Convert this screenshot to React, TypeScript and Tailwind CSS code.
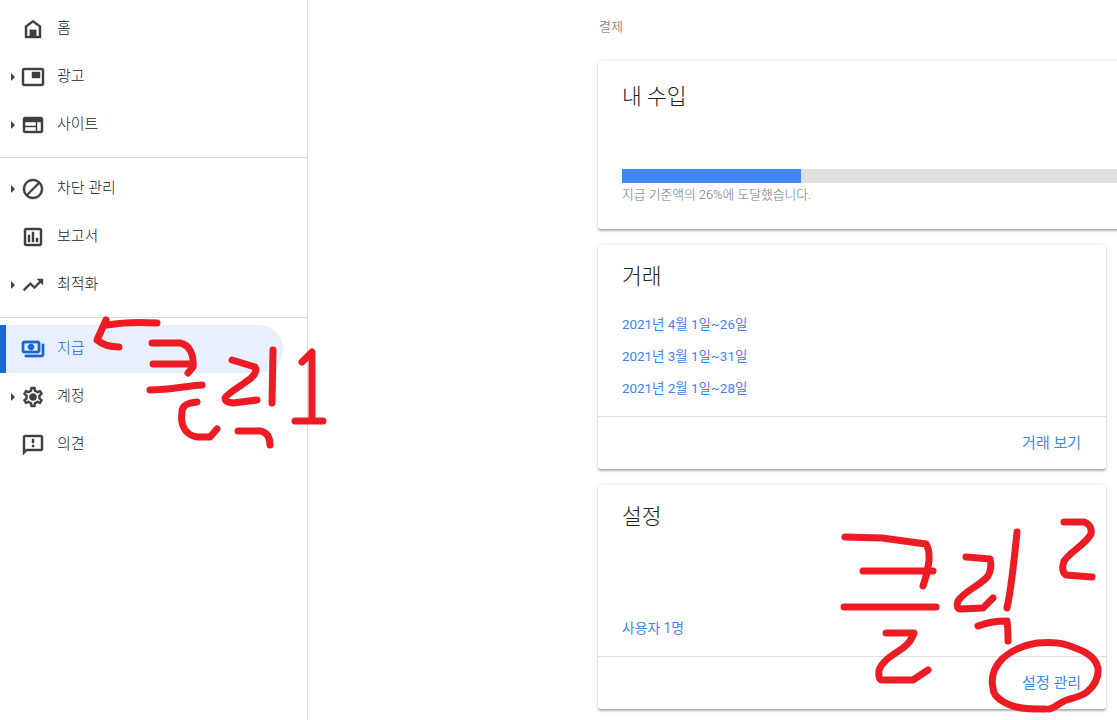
import React from "react";

const ICON = "#3c4043";

function Icon({ d, color = ICON, weight = "0.45", children }: { d?: string; color?: string; weight?: string; children?: React.ReactNode }) {
  return (
    <svg width="24" height="24" viewBox="0 0 24 24" fill={color} stroke={color} strokeWidth={weight} className="shrink-0">
      {d && <path d={d} />}
      {children}
    </svg>
  );
}

const gear =
  "M19.43 12.98c.04-.32.07-.64.07-.98 0-.34-.03-.66-.07-.98l2.11-1.65c.19-.15.24-.42.12-.64l-2-3.46c-.09-.16-.26-.25-.44-.25-.06 0-.12.01-.17.03l-2.49 1c-.52-.4-1.08-.73-1.69-.98l-.38-2.65C14.46 2.18 14.25 2 14 2h-4c-.25 0-.46.18-.49.42l-.38 2.65c-.61.25-1.17.59-1.69.98l-2.49-1c-.06-.02-.12-.03-.18-.03-.17 0-.34.09-.43.25l-2 3.46c-.13.22-.07.49.12.64l2.11 1.65c-.04.32-.07.65-.07.98 0 .33.03.66.07.98l-2.11 1.65c-.19.15-.24.42-.12.64l2 3.46c.09.16.26.25.44.25.06 0 .12-.01.17-.03l2.49-1c.52.4 1.08.73 1.69.98l.38 2.65c.03.24.24.42.49.42h4c.25 0 .46-.18.49-.42l.38-2.65c.61-.25 1.17-.59 1.69-.98l2.49 1c.06.02.12.03.18.03.17 0 .34-.09.43-.25l2-3.46c.12-.22.07-.49-.12-.64l-2.11-1.65zm-1.98-1.71c.04.31.05.52.05.73 0 .21-.02.43-.05.73l-.14 1.13.89.7 1.08.84-.7 1.21-1.27-.51-1.04-.42-.9.68c-.43.32-.84.56-1.25.73l-1.06.43-.16 1.13-.2 1.35h-1.4l-.19-1.35-.16-1.13-1.06-.43c-.43-.18-.83-.41-1.23-.71l-.91-.7-1.06.43-1.27.51-.7-1.21 1.08-.84.89-.7-.14-1.13c-.03-.31-.05-.54-.05-.74s.02-.43.05-.73l.14-1.13-.89-.7-1.08-.84.7-1.21 1.27.51 1.04.42.9-.68c.43-.32.84-.56 1.25-.73l1.06-.43.16-1.13.2-1.35h1.39l.19 1.35.16 1.13 1.06.43c.43.18.83.41 1.23.71l.91.7 1.06-.43 1.27-.51.7 1.21-1.07.85-.89.7.14 1.13z";

type Item = { label: string; caret?: boolean; icon: React.ReactNode; active?: boolean };

const groupA: Item[] = [
  {
    label: "홈",
    icon: (
      <Icon d="M12 3L4 9v12h16V9l-8-6zm6 16h-3v-6H9v6H6v-9l6-4.5 6 4.5v9z">
        <rect x="9" y="13" width="6" height="7" />
      </Icon>
    ),
  },
  {
    label: "광고",
    caret: true,
    icon: <Icon d="M19 7h-8v6h8V7zm2-4H3c-1.1 0-2 .9-2 2v14c0 1.1.9 1.98 2 1.98h18c1.1 0 2-.88 2-1.98V5c0-1.1-.9-2-2-2zm0 16.01H3V4.98h18v14.03z" />,
  },
  {
    label: "사이트",
    caret: true,
    icon: <Icon d="M20 4H4c-1.1 0-1.99.9-1.99 2L2 18c0 1.1.9 2 2 2h16c1.1 0 2-.9 2-2V6c0-1.1-.9-2-2-2zm-5 14H4v-4h11v4zm0-5H4V9h11v4zm5 5h-4V9h4v9z" />,
  },
];

const groupB: Item[] = [
  {
    label: "차단 관리",
    caret: true,
    icon: <Icon d="M12 2C6.48 2 2 6.48 2 12s4.48 10 10 10 10-4.48 10-10S17.52 2 12 2zM4 12c0-4.42 3.58-8 8-8 1.85 0 3.55.63 4.9 1.69L5.69 16.9C4.63 15.55 4 13.85 4 12zm8 8c-1.85 0-3.55-.63-4.9-1.69L18.31 7.1C19.37 8.45 20 10.15 20 12c0 4.42-3.58 8-8 8z" />,
  },
  {
    label: "보고서",
    icon: <Icon d="M19 3H5c-1.1 0-2 .9-2 2v14c0 1.1.9 2 2 2h14c1.1 0 2-.9 2-2V5c0-1.1-.9-2-2-2zm0 16H5V5h14v14zM7 10h2v7H7zm4-3h2v10h-2zm4 6h2v4h-2z" />,
  },
  {
    label: "최적화",
    caret: true,
    icon: <Icon d="M16 6l2.29 2.29-4.88 4.88-4-4L2 16.59 3.41 18l6-6 4 4 6.3-6.29L22 12V6z" />,
  },
];

const groupC: Item[] = [
  {
    label: "지급",
    active: true,
    icon: (
      <Icon color="#1967d2" weight="0.8" d="M19 14V6c0-1.1-.9-2-2-2H3c-1.1 0-2 .9-2 2v8c0 1.1.9 2 2 2h14c1.1 0 2-.9 2-2zm-2 0H3V6h14v8zm-7-7c-1.66 0-3 1.34-3 3s1.34 3 3 3 3-1.34 3-3-1.34-3-3-3zm13 0v11c0 1.1-.9 2-2 2H4v-2h17V7h2z" />
    ),
  },
  {
    label: "계정",
    caret: true,
    icon: (
      <Icon d={gear}>
        <circle cx="12" cy="12" r="3.6" />
      </Icon>
    ),
  },
  {
    label: "의견",
    icon: <Icon d="M20 2H4c-1.1 0-1.99.9-1.99 2L2 22l4-4h14c1.1 0 2-.9 2-2V4c0-1.1-.9-2-2-2zm0 14H5.17L4 17.17V4h16v12zm-9-4h2v2h-2zm0-6h2v4h-2z" />,
  },
];

function NavRow({ item }: { item: Item }) {
  return (
    <div
      className={
        "flex h-12 items-center rounded-r-3xl " +
        (item.active ? "w-[283px] border-l-[6px] border-[#1967d2] bg-[#e8f0fe] pl-[15px] text-[#1967d2]" : "w-full pl-[21px] text-[#202124]")
      }
    >
      <div className="relative">
        {item.caret && (
          <span className="absolute left-[-10px] top-[8px] h-0 w-0 border-y-[4px] border-l-[4px] border-y-transparent border-l-[#3c4043]" />
        )}
        {item.icon}
      </div>
      <span className="ml-3 -mt-0.5 text-[15px] font-light">{item.label}</span>
    </div>
  );
}

function Card({ children, wide }: { children: React.ReactNode; wide?: boolean }) {
  return (
    <section
      className={
        "shrink-0 rounded-[3px] bg-white shadow-[0_2px_2px_rgba(0,0,0,0.28),0_0_5px_rgba(0,0,0,0.1)] " +
        (wide ? "h-[168px] w-[760px]" : "flex h-[224px] w-[508px] flex-col")
      }
    >
      {children}
    </section>
  );
}

function Title({ children }: { children: React.ReactNode }) {
  return <h2 className="text-[21.5px] font-light leading-7 text-[#212121]">{children}</h2>;
}

function Footer({ children }: { children: React.ReactNode }) {
  return (
    <div className="flex h-[53px] items-center justify-end border-t border-[#e0e0e0] pr-[25px] text-[15px] text-[#4285f4]">
      {children}
    </div>
  );
}

const red = "#ed1c24";
const scribbles = [
  "M107 325C125 322 140 322 157 323",
  "M106 320L97 340C103 345 110 347 119 347",
  "M152 343L180 343C190 345 194 355 193 367L188 373",
  "M153 364L193 364",
  "M150 390C170 390 185 386 202 385",
  "M197 402C188 403 182 405 182 412C180 425 185 435 197 437L210 437L217 429",
  "M232 360L255 367C258 372 252 378 247 381C238 388 228 393 225 398C225 403 229 402 233 403L257 400",
  "M273 350L272 403",
  "M238 431L260 431C266 432 270 436 270 445",
  "M302 362L312 352L312 417",
  "M295 421L323 421",
  "M845 537L882 538L926 544C930 550 929 555 929 561C928 570 926 578 923 586",
  "M863 571L933 571",
  "M844 607L936 607",
  "M886 633L914 633C912 640 908 644 903 648C893 655 883 660 879 670C878 677 880 680 882 680L913 680L928 670",
  "M966 557L990 559C992 566 990 572 988 576C980 586 965 590 958 601C956 606 958 609 960 609L983 608L993 598",
  "M1017 532C1014 560 1012 585 1007 608",
  "M978 626C988 622 997 621 1007 621C1008 628 1008 634 1008 641",
  "M1064 522L1084 522C1090 524 1092 529 1091 534C1085 545 1072 550 1064 561C1062 567 1062 572 1066 575L1092 577",
  "M1045 709C1032 709 1020 709 1010 705C998 700 993 695 993 688C990 675 996 665 1003 658C1012 650 1025 645 1037 643C1047 642 1058 642 1067 645C1082 650 1095 655 1098 668C1099 680 1093 687 1087 692C1080 697 1073 698 1067 700C1060 702 1055 708 1049 709",
];

export default function App() {
  return (
    <div
      className="relative flex h-[720px] w-[1117px] overflow-hidden bg-white"
      style={{ fontFamily: 'Roboto, "Noto Sans CJK KR", "Noto Sans", sans-serif' }}
    >
      <aside className="flex w-[308px] shrink-0 flex-col border-r border-[#dadce0] pt-[5px]">
        {groupA.map((i) => (
          <NavRow key={i.label} item={i} />
        ))}
        <div className="mb-[7px] mt-2 h-px bg-[#dadce0]" />
        {groupB.map((i) => (
          <NavRow key={i.label} item={i} />
        ))}
        <div className="mb-[7px] mt-2 h-px bg-[#dadce0]" />
        {groupC.map((i) => (
          <NavRow key={i.label} item={i} />
        ))}
      </aside>

      <main className="flex min-w-0 flex-1 flex-col gap-4 pl-[290px]">
        <div className="-mb-4 flex h-[61px] items-center pb-[8px] pl-px text-[13px] font-light text-[#616161]">결제</div>

        <Card wide>
          <div className="px-6 pt-[22px]">
            <Title>내 수입</Title>
            <div className="mt-[58px] h-[14px] w-[700px] bg-[#e0e0e0]">
              <div className="h-full w-[179px] bg-[#4285f4]" />
            </div>
            <p className="mt-1 text-[12.8px] font-light leading-4 text-[#757575]">지급 기준액의 26%에 도달했습니다.</p>
          </div>
        </Card>

        <Card>
          <div className="flex-1 px-6 pt-[18px]">
            <Title>거래</Title>
            <ul className="mt-[24px] flex flex-col gap-3 text-[13.4px] leading-5 text-[#4285f4]">
              <li>2021년 4월 1일~26일</li>
              <li>2021년 3월 1일~31일</li>
              <li>2021년 2월 1일~28일</li>
            </ul>
          </div>
          <Footer>거래 보기</Footer>
        </Card>

        <Card>
          <div className="flex flex-1 flex-col justify-between px-6 pb-[18px] pt-[18px]">
            <Title>설정</Title>
            <p className="text-[13.8px] leading-5 text-[#4285f4]">사용자 1명</p>
          </div>
          <Footer>설정 관리</Footer>
        </Card>
      </main>

      <svg
        className="pointer-events-none absolute left-0 top-0"
        width="1117"
        height="720"
        viewBox="0 0 1117 720"
        fill="none"
        stroke={red}
        strokeWidth="7"
        strokeLinecap="round"
        strokeLinejoin="round"
      >
        {scribbles.map((d, i) => (
          <path key={i} d={d} />
        ))}
      </svg>
    </div>
  );
}
